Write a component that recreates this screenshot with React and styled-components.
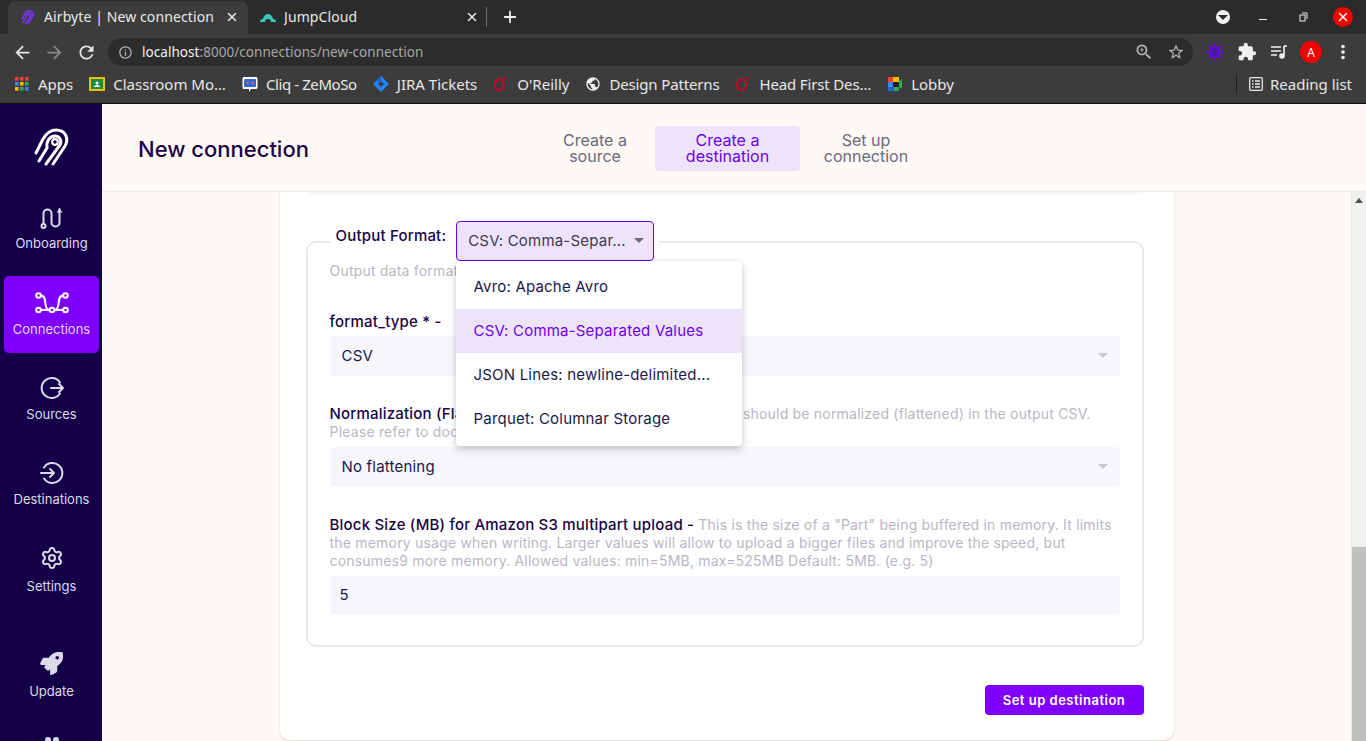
import React from "react";
import styled, {createGlobalStyle} from "styled-components";
import {X, Plus, Settings} from "lucide-react";
import {FaRocket} from "react-icons/fa";
import {MdArrowBack, MdArrowForward, MdRefresh, MdInfoOutline, MdZoomIn, MdStarBorder, MdExtension, MdMoreVert, MdPublic} from "react-icons/md";

const GlobalStyle = createGlobalStyle`
  * { box-sizing: border-box; }
  html, body { margin: 0; padding: 0; overflow: hidden; }
  body { font-family: Inter, "Liberation Sans", sans-serif; color: #1a194d; }
`

const Page = styled.div`
  width: 1366px;
  height: 741px;
  display: flex;
  flex-direction: column;
  overflow: hidden;
`

/* browser chrome */

const Chrome = styled.div`
  flex: 0 0 104px;
  display: flex;
  flex-direction: column;
  background: #3c3c3c;
  border-bottom: 1px solid #0e0e0e;
  font-family: "Noto Sans", sans-serif;
  color: #e8e8e8;
`

const TabStrip = styled.div`
  height: 34px;
  padding: 1px 0 0 8px;
  display: flex;
  align-items: stretch;
  background: #2b2b2b;
`

const Tab = styled.div`
  width: 240px;
  padding: 0 9px 2px 12px;
  display: flex;
  align-items: center;
  gap: 8px;
  font-size: 14px;
  background: ${p => p.$active ? "#3c3c3c" : "transparent"};
  border-radius: 8px 8px 0 0;
`

const TabTitle = styled.span`
  flex: 1;
  white-space: nowrap;
  overflow: hidden;
  letter-spacing: 0.1px;
`

const TabDivider = styled.div`
  width: 1px;
  height: 20px;
  margin: 6px 14px 0 -2px;
  background: #6b6b6b;
`

const NewTab = styled.div`
  height: 32px;
  display: flex;
  align-items: center;
  color: #f0f0f0;
`

const WindowControls = styled.div`
  margin-left: auto;
  display: flex;
  align-items: center;
  height: 32px;
  padding-right: 3px;
  color: #f0f0f0;
`

const ToolCell = styled.div`
  width: ${p => p.$w || 32}px;
  display: flex;
  align-items: center;
  justify-content: center;
  color: ${p => p.$color || "inherit"};
`

const WindowDot = styled.div`
  width: ${p => p.$size}px;
  height: ${p => p.$size}px;
  display: flex;
  align-items: center;
  justify-content: center;
  border-radius: 50%;
  background: ${p => p.$bg};
`

const MinimizeBar = styled.div`
  width: 8px;
  height: 1px;
  margin-top: 5px;
  background: #f0f0f0;
`

const Toolbar = styled.div`
  height: 36px;
  padding-left: 6px;
  display: flex;
  align-items: center;
`

const NavButtons = styled.div`
  width: 102px;
  display: flex;
  color: #e8e8e8;
`

const Omnibox = styled.div`
  width: 1085px;
  height: 28px;
  padding: 0 8px 0 10px;
  display: flex;
  align-items: center;
  gap: 9px;
  background: #2c2c2c;
  border-radius: 14px;
  font-size: 13.5px;
  color: #a8a8a8;
`

const Url = styled.div`
  flex: 1;
  white-space: nowrap;
  letter-spacing: 0.05px;
  b { font-weight: 400; color: #f2f2f2; }
`

const OmniIcons = styled.div`
  display: flex;
  align-items: center;
  gap: 13px;
  color: #b8b8b8;
`

const Extensions = styled.div`
  margin-left: 6px;
  display: flex;
  align-items: center;
  color: #f0f0f0;
`

const Avatar = styled.div`
  width: 22px;
  height: 22px;
  border-radius: 50%;
  background: #f40000;
  color: #fff;
  font-size: 12px;
  display: flex;
  align-items: center;
  justify-content: center;
`

const Bookmarks = styled.div`
  flex: 1;
  padding: 0 14px 5px 15px;
  display: flex;
  align-items: center;
  gap: 16px;
  font-size: 15px;
  white-space: nowrap;
`

const Bookmark = styled.div`
  display: flex;
  align-items: center;
  gap: 8px;
  letter-spacing: ${p => p.$spacing || 0}px;
  svg { flex: none; }
`

const ReadingList = styled(Bookmark)`
  margin-left: auto;
  padding-left: 12px;
  border-left: 1px solid #1f1f1f;
  gap: 7px;
`

/* airbyte app */

const AppBody = styled.div`
  flex: 1;
  min-height: 0;
  display: flex;
`

const Sidebar = styled.nav`
  flex: 0 0 102px;
  padding: 0 3px 0 4px;
  display: flex;
  flex-direction: column;
  overflow: hidden;
  background: #140049;
`

const LogoBlock = styled.div`
  flex: 0 0 87px;
  display: flex;
  align-items: flex-start;
  justify-content: center;
  padding-top: 21px;
  color: #fff;
`

const NavList = styled.div`
  display: flex;
  flex-direction: column;
  gap: 8px;
`

const NavBottom = styled(NavList)`
  margin-top: 28px;
`

const NavItem = styled.div`
  flex: 0 0 77px;
  padding-top: 15px;
  display: flex;
  flex-direction: column;
  align-items: center;
  gap: ${p => p.$gap || 6}px;
  border-radius: 5px;
  background: ${p => p.$active ? "#7f00ff" : "transparent"};
  color: #dcdae8;
  font-size: 13px;
  line-height: 16px;
  svg { flex: none; }
`

const NavIconBox = styled.div`
  width: 24px;
  height: 24px;
  display: flex;
  align-items: center;
  justify-content: center;
`

const Main = styled.div`
  flex: 1;
  min-width: 0;
  display: flex;
  flex-direction: column;
  background: #fef9f4;
`

const Header = styled.header`
  flex: 0 0 88px;
  padding: 2px 38px 0 36px;
  display: grid;
  grid-template-columns: 1fr auto 1fr;
  align-items: center;
  border-bottom: 1px solid #e8e8ed;
`

const PageTitle = styled.h1`
  margin: 0;
  font-size: 22px;
  font-weight: 500;
  color: #1a0347;
  white-space: nowrap;
`

const Steps = styled.div`
  display: flex;
`

const Step = styled.div`
  width: ${p => p.$w}px;
  height: 45px;
  padding: 0 0 1px 1px;
  display: flex;
  align-items: center;
  justify-content: center;
  text-align: center;
  font-size: 16px;
  line-height: 16px;
  font-weight: 400;
  border-radius: 4px;
  background: ${p => p.$active ? "#ede4fb" : "transparent"};
  color: ${p => p.$active ? "#7000ee" : "#6c6a80"};
`

const ScrollRow = styled.div`
  flex: 1;
  min-height: 0;
  display: flex;
`

const Content = styled.div`
  flex: 1;
  min-width: 0;
  display: flex;
  justify-content: center;
  overflow: hidden;
`

const Scrollbar = styled.div`
  flex: 0 0 15px;
  display: flex;
  flex-direction: column;
  background: #f1f1f1;
  border-left: 1px solid #e9e9e9;
`

const ScrollArrow = styled.div`
  height: 17px;
  padding-top: 6px;
  display: flex;
  justify-content: center;
`

const ScrollThumb = styled.div`
  margin-top: auto;
  height: 194px;
  background: #c1c1c1;
`

const Card = styled.div`
  width: 894px;
  height: 548px;
  padding: 0 30px 0 26px;
  background: #fff;
  border-radius: 0 0 10px 10px;
  box-shadow: 0 1px 2px rgba(53, 53, 66, 0.2);
`

const PrevInput = styled.div`
  height: 3px;
  margin: 0 1px 26px;
  background: #f8f7fc;
  border-radius: 0 0 4px 4px;
`

const Fieldset = styled.fieldset`
  position: relative;
  width: 838px;
  height: 426px;
  margin: 0;
  padding: 0 22px;
  border: 2px solid #e8e8ed;
  border-radius: 10px;
  min-width: 0;
`

const Legend = styled.legend`
  padding: 0 5px 2px 6px;
  display: flex;
  align-items: flex-start;
  gap: 10px;
  font-size: 15px;
  letter-spacing: 0.2px;
  font-weight: 500;
  color: #1a0347;
`

const LegendLabel = styled.span`
  line-height: 30px;
`

const FormatSelect = styled.div`
  width: 198px;
  height: 40px;
  padding: 0 9px 2px 11px;
  display: flex;
  align-items: center;
  justify-content: space-between;
  background: #ede4fb;
  border: 1px solid #7000ee;
  border-radius: 4px;
  font-weight: 400;
  color: #3c3a55;
  white-space: nowrap;
`

const Caret = styled.span`
  width: 0;
  height: 0;
  border-left: 5px solid transparent;
  border-right: 5px solid transparent;
  border-top: 5px solid ${p => p.$color || "#6c6a80"};
`

const Hint = styled.div`
  font-size: 14px;
  line-height: 18px;
  letter-spacing: 0.2px;
  color: #b9b7c3;
`

const TopHint = styled(Hint)`
  margin: -1px 0 33px;
`

const Label = styled(Hint)`
  margin-bottom: ${p => p.$mb ?? 6}px;
  b { font-weight: 500; font-size: 15px; letter-spacing: 0.2px; color: #1a0347; }
`

const Field = styled.div`
  height: ${p => p.$h || 40}px;
  margin-bottom: ${p => p.$mb || 0}px;
  padding: 0 12px 2px;
  display: flex;
  align-items: center;
  justify-content: space-between;
  background: #f7f6fb;
  border-radius: 4px;
  font-size: 15px;
  letter-spacing: 0.2px;
  color: #1a194d;
`

const NumberField = styled(Field)`
  padding-left: 10px;
`

const Dropdown = styled.div`
  position: absolute;
  left: 148px;
  top: -2px;
  width: 286px;
  padding: 4px 0 5px;
  background: #fff;
  border-radius: 4px;
  box-shadow: 0 1px 4px rgba(0,0,0,0.1), 0 4px 10px rgba(0,0,0,0.16);
  z-index: 5;
`

const Option = styled.div`
  height: 44px;
  padding: 0 18px 2px;
  display: flex;
  align-items: center;
  font-size: 15px;
  letter-spacing: 0.2px;
  background: ${p => p.$selected ? "#ede4fb" : "transparent"};
  color: ${p => p.$selected ? "#7000ee" : "#1a194d"};
`

const Footer = styled.div`
  margin-top: 38px;
  display: flex;
  justify-content: flex-end;
`

const Submit = styled.button`
  width: 159px;
  height: 30px;
  padding: 0;
  border: 0;
  border-radius: 4px;
  background: #7f00ff;
  color: #fff;
  font-family: inherit;
  font-size: 13px;
  font-weight: 600;
  letter-spacing: 0.5px;
`

function AirbyteLogo({size = 36, color = "currentColor", weight = 3}) {
    return (
        <svg width={size} height={size} viewBox="0 0 44 44" fill="none" stroke={color} strokeWidth={weight} strokeLinecap="round">
            <path d="M23 39 L35 21 C39 14 36 5 26 5 C20 5 16 9 13 14 L6 28"/>
            <path d="M9 36 L17 23 C16 16 20 11 25 11 C30 11 32 16 30 20 L16 39"/>
            <circle cx="25" cy="17" r="2.8" strokeWidth="2.2"/>
        </svg>
    )
}

function OnboardingIcon() {
    return (
        <svg width="24" height="24" viewBox="0 0 24 24" fill="none" stroke="#dcdae8" strokeWidth="2" strokeLinecap="round">
            <circle cx="3.500" cy="20" r="2"/>
            <path d="M3.500 18V7.500a4 4 0 0 1 8 0v9a4 4 0 0 0 8 0V3"/>
            <path d="M16.500 6.500l3-4 3 4z" fill="#dcdae8" strokeWidth="0"/>
        </svg>
    )
}

function ConnectionsIcon() {
    return (
        <svg width="34" height="22" viewBox="0 0 34 22" fill="none" stroke="#fff" strokeWidth="2">
            <circle cx="3.500" cy="3.500" r="2.300"/>
            <circle cx="30.500" cy="3.500" r="2.300"/>
            <circle cx="3.500" cy="18" r="2.300"/>
            <circle cx="17" cy="18" r="2.300"/>
            <circle cx="30.500" cy="18" r="2.300"/>
            <path d="M5.800 18h8.900M19.300 18h8.900M5.800 3.500C10 3.500 10 8 10.500 12 11 16 12 18 14.700 18M28.200 3.500C24 3.500 24 8 23.500 12 23 16 22 18 19.300 18"/>
        </svg>
    )
}

function SourcesIcon() {
    return (
        <svg width="24" height="24" viewBox="0 0 24 24" fill="none" stroke="#dcdae8" strokeWidth="2" strokeLinecap="round" strokeLinejoin="round">
            <path d="M20 6.500A10 10 0 1 0 20 17.500"/>
            <path d="M11 12h12M19 8l4 4-4 4"/>
        </svg>
    )
}

function DestinationsIcon() {
    return (
        <svg width="24" height="24" viewBox="0 0 24 24" fill="none" stroke="#dcdae8" strokeWidth="2" strokeLinecap="round" strokeLinejoin="round">
            <path d="M4 6.500A10 10 0 1 1 4 17.500"/>
            <path d="M1 12h13M10 8l4 4-4 4"/>
        </svg>
    )
}

function HelpDots() {
    return (
        <svg width="24" height="24" viewBox="0 0 24 24" fill="#dcdae8">
            <circle cx="8" cy="4" r="3"/>
            <circle cx="16" cy="4" r="3"/>
        </svg>
    )
}

function AppsGrid() {
    const colors = ["#ea4335", "#ea4335", "#ea4335", "#4285f4", "#fbbc05", "#34a853", "#fbbc05", "#34a853", "#4285f4"]
    return (
        <svg width="15" height="14" viewBox="0 0 15 14">
            {colors.map((color, i) => (
                <rect key={i} x={(i % 3) * 5} y={Math.floor(i / 3) * 5} width="3.600" height="3.600" fill={color}/>
            ))}
        </svg>
    )
}

function ClassroomIcon() {
    return (
        <svg width="16" height="16" viewBox="0 0 16 16">
            <rect x="0" y="1" width="16" height="14" rx="1" fill="#fbbc05"/>
            <rect x="2" y="3" width="12" height="10" fill="#1e8e3e"/>
            <circle cx="8" cy="7" r="1.500" fill="#fff"/>
            <path d="M5 11a3 2 0 0 1 6 0z" fill="#fff"/>
        </svg>
    )
}

function CliqIcon() {
    return (
        <svg width="16" height="17" viewBox="0 0 16 17">
            <path d="M2 1h12a1.500 1.500 0 0 1 1.500 1.500v9A1.500 1.500 0 0 1 14 13H9l-2 3v-3H2a1.500 1.500 0 0 1-1.500-1.500v-9A1.500 1.500 0 0 1 2 1z" fill="#fff"/>
            <rect x="2" y="3" width="12" height="8" rx="1" fill="#2f6bd8"/>
            <circle cx="5.500" cy="7" r="1.200" fill="#ff5252"/>
            <circle cx="10.500" cy="7" r="1.200" fill="#ff5252"/>
        </svg>
    )
}

function JiraIcon() {
    return (
        <svg width="16" height="16" viewBox="0 0 16 16">
            <path d="M8 0l8 8-8 8-8-8z" fill="#2684ff"/>
            <path d="M8 5l3 3-3 3-3-3z" fill="#3c3c3c"/>
            <path d="M4 4l4-4v5L6.500 6.500z" fill="#1a5fd0"/>
        </svg>
    )
}

function OreillyIcon() {
    return (
        <svg width="16" height="16" viewBox="0 0 16 16" fill="none" stroke="#d3002d" strokeWidth="2">
            <ellipse cx="6.500" cy="9" rx="4.500" ry="5.500"/>
            <path d="M11 3l3-1.500" strokeWidth="1.800"/>
        </svg>
    )
}

function MeetIcon() {
    return (
        <svg width="16" height="16" viewBox="0 0 16 16">
            <rect x="1" y="1" width="5" height="5" fill="#ea4335"/>
            <rect x="6" y="1" width="6" height="5" fill="#fbbc05"/>
            <rect x="1" y="6" width="5" height="5" fill="#4285f4"/>
            <rect x="1" y="11" width="6" height="4" fill="#1967d2"/>
            <rect x="7" y="11" width="5" height="4" fill="#34a853"/>
            <path d="M12 5l3-2v10l-3-2z" fill="#34a853"/>
            <rect x="6" y="6" width="6" height="5" fill="#202124"/>
        </svg>
    )
}

function ReadingIcon() {
    return (
        <svg width="14" height="14" viewBox="0 0 14 14" fill="none" stroke="#e8e8e8" strokeWidth="1.300">
            <rect x="0.700" y="0.700" width="12.600" height="12.600" rx="1"/>
            <path d="M3 4h1.500M6 4h5M3 7h1.500M6 7h5M3 10h1.500M6 10h5"/>
        </svg>
    )
}

function MediaIcon() {
    return (
        <svg width="18" height="16" viewBox="0 0 18 16" fill="none" stroke="#f0f0f0" strokeWidth="1.600">
            <path d="M1 3h10M1 7h10M1 11h6M14 2v9"/>
            <circle cx="12" cy="12" r="2" fill="#f0f0f0"/>
            <path d="M14 2h3"/>
        </svg>
    )
}

function ExtensionIcon() {
    return (
        <svg width="18" height="18" viewBox="0 0 18 18" fill="#6a00f4" stroke="#6a00f4" strokeWidth="1.800">
            <circle cx="9" cy="9" r="4.500" fill="#3d1f8f"/>
            <path d="M9 0v4M9 14v4M0 9h4M14 9h4M3 3l3 3M12 12l3 3M15 3l-3 3M6 12l-3 3"/>
        </svg>
    )
}

function JumpCloudIcon() {
    return (
        <svg width="16" height="16" viewBox="0 0 16 16">
            <path d="M0 13a3 3 0 0 1 3-3c.500-3 2.500-5 5-5s4.500 2 5 5a3 3 0 0 1 3 3z" fill="#39c7bd"/>
            <path d="M5 13a3 3 0 0 1 6 0z" fill="#2b2b2b"/>
        </svg>
    )
}

const bookmarks = [
    {icon: <AppsGrid/>, label: "Apps"},
    {icon: <ClassroomIcon/>, label: "Classroom Mo…"},
    {icon: <CliqIcon/>, label: "Cliq - ZeMoSo", spacing: -0.4},
    {icon: <JiraIcon/>, label: "JIRA Tickets"},
    {icon: <OreillyIcon/>, label: "O'Reilly"},
    {icon: <MdPublic size={16} color="#f0f0f0"/>, label: "Design Patterns", spacing: -0.15},
    {icon: <OreillyIcon/>, label: "Head First Des…", spacing: -0.15},
    {icon: <MeetIcon/>, label: "Lobby"},
]

const formatOptions = [
    {label: "Avro: Apache Avro"},
    {label: "CSV: Comma-Separated Values", selected: true},
    {label: "JSON Lines: newline-delimited..."},
    {label: "Parquet: Columnar Storage"},
]

function BrowserChrome() {
    return (
        <Chrome>
            <TabStrip>
                <Tab $active>
                    <AirbyteLogo size={16} color="#7a35e8" weight={4.5}/>
                    <TabTitle>Airbyte | New connection</TabTitle>
                    <X size={14} strokeWidth={2.5}/>
                </Tab>
                <Tab>
                    <JumpCloudIcon/>
                    <TabTitle>JumpCloud</TabTitle>
                    <X size={14} strokeWidth={2.5}/>
                </Tab>
                <TabDivider/>
                <NewTab><Plus size={18} strokeWidth={2.4}/></NewTab>
                <WindowControls>
                    <ToolCell $w={40}><WindowDot $size={14} $bg="#f4f4f4"><Caret $color="#2b2b2b"/></WindowDot></ToolCell>
                    <ToolCell $w={40}><MinimizeBar/></ToolCell>
                    <ToolCell $w={40}>
                        <svg width="9" height="10" viewBox="0 0 9 10" fill="none" stroke="#f0f0f0">
                            <rect x="1" y="3" width="5" height="6"/>
                            <path d="M3 1h5v6"/>
                        </svg>
                    </ToolCell>
                    <ToolCell $w={40}><WindowDot $size={20} $bg="#f40000"><X size={14} color="#fff" strokeWidth={2.5}/></WindowDot></ToolCell>
                </WindowControls>
            </TabStrip>
            <Toolbar>
                <NavButtons>
                    <ToolCell><MdArrowBack size={21}/></ToolCell>
                    <ToolCell $color="#8a8a8a"><MdArrowForward size={21}/></ToolCell>
                    <ToolCell><MdRefresh size={21}/></ToolCell>
                </NavButtons>
                <Omnibox>
                    <MdInfoOutline size={15} color="#b8b8b8"/>
                    <Url><b>localhost</b>:8000/connections/new-connection</Url>
                    <OmniIcons>
                        <MdZoomIn size={20}/>
                        <MdStarBorder size={18}/>
                    </OmniIcons>
                </Omnibox>
                <Extensions>
                    <ToolCell><ExtensionIcon/></ToolCell>
                    <ToolCell><MdExtension size={20}/></ToolCell>
                    <ToolCell><MediaIcon/></ToolCell>
                    <ToolCell><Avatar>A</Avatar></ToolCell>
                    <ToolCell><MdMoreVert size={22}/></ToolCell>
                </Extensions>
            </Toolbar>
            <Bookmarks>
                {bookmarks.map(item => (
                    <Bookmark key={item.label} $spacing={item.spacing}>{item.icon}{item.label}</Bookmark>
                ))}
                <ReadingList><ReadingIcon/>Reading list</ReadingList>
            </Bookmarks>
        </Chrome>
    )
}

function SideNav() {
    return (
        <Sidebar>
            <LogoBlock><AirbyteLogo size={44}/></LogoBlock>
            <NavList>
                <NavItem $gap={5}><NavIconBox><OnboardingIcon/></NavIconBox>Onboarding</NavItem>
                <NavItem $active><NavIconBox><ConnectionsIcon/></NavIconBox>Connections</NavItem>
                <NavItem><NavIconBox><SourcesIcon/></NavIconBox>Sources</NavItem>
                <NavItem><NavIconBox><DestinationsIcon/></NavIconBox>Destinations</NavItem>
                <NavItem $gap={8}><NavIconBox><Settings size={24} color="#dcdae8"/></NavIconBox>Settings</NavItem>
            </NavList>
            <NavBottom>
                <NavItem $gap={8}><NavIconBox><FaRocket size={23} color="#dcdae8"/></NavIconBox>Update</NavItem>
                <NavItem><NavIconBox><HelpDots/></NavIconBox></NavItem>
            </NavBottom>
        </Sidebar>
    )
}

function OutputForm() {
    return (
        <Fieldset>
            <Legend>
                <LegendLabel>Output Format:</LegendLabel>
                <FormatSelect>CSV: Comma-Separ... <Caret/></FormatSelect>
            </Legend>
            <Dropdown>
                {formatOptions.map(option => (
                    <Option key={option.label} $selected={option.selected}>{option.label}</Option>
                ))}
            </Dropdown>
            <TopHint>Output data format</TopHint>
            <Label $mb={5}><b>format_type * -</b></Label>
            <Field $mb={29}>CSV <Caret $color="#c8c6d4"/></Field>
            <Label $mb={6}>
                <b>Normalization (Flattening) -</b>&nbsp; Whether the input JSON data should be normalized (flattened) in the output CSV.<br/>
                Please refer to docs for details.
            </Label>
            <Field $mb={29}>No flattening <Caret $color="#c8c6d4"/></Field>
            <Label $mb={6}>
                <b>Block Size (MB) for Amazon S3 multipart upload -</b> This is the size of a "Part" being buffered in memory. It limits the memory usage when writing. Larger values will allow to upload a bigger files and improve the speed, but consumes9 more memory. Allowed values: min=5MB, max=525MB Default: 5MB. (e.g. 5)
            </Label>
            <NumberField $h={39}>5</NumberField>
        </Fieldset>
    )
}

export default function App() {
    return (
        <Page>
            <GlobalStyle/>
            <BrowserChrome/>
            <AppBody>
                <SideNav/>
                <Main>
                    <Header>
                        <PageTitle>New connection</PageTitle>
                        <Steps>
                            <Step $w={120}>Create a<br/>source</Step>
                            <Step $w={145} $active>Create a<br/>destination</Step>
                            <Step $w={132}>Set up<br/>connection</Step>
                        </Steps>
                    </Header>
                    <ScrollRow>
                        <Content>
                            <Card>
                                <PrevInput/>
                                <OutputForm/>
                                <Footer><Submit>Set up destination</Submit></Footer>
                            </Card>
                        </Content>
                        <Scrollbar>
                            <ScrollArrow>
                                <svg width="8" height="5" viewBox="0 0 8 5"><path d="M4 0l4 5H0z" fill="#505050"/></svg>
                            </ScrollArrow>
                            <ScrollThumb/>
                        </Scrollbar>
                    </ScrollRow>
                </Main>
            </AppBody>
        </Page>
    )
}
